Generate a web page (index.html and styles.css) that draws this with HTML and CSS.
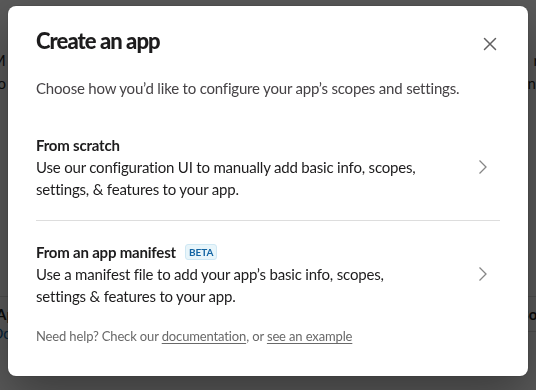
FILE: index.html
```html
<!DOCTYPE html>
<html>
<head>
<meta charset="utf-8">
<link rel="stylesheet" href="styles.css">
</head>
<body>
<div class="page">
  <div class="page-intro">
    <p class="page-line">Manage your apps here, or create a new one for</p>
    <p class="page-line">Go to the app directory to see installed apps and</p>
  </div>
  <div class="page-table">
    <div class="page-row"><span class="page-cell">App</span><span class="page-cell page-right">Book</span></div>
    <div class="page-row"><span class="page-cell page-link">Do</span><span class="page-cell"></span></div>
  </div>
</div>

<div class="overlay">
  <div class="modal">
    <div class="modal-header">
      <h1 class="modal-title">Create an app</h1>
      <button class="close" aria-label="Close">
        <svg width="14" height="14" viewBox="0 0 14 14"><path d="M1.5 1.5 L12.5 12.5 M12.5 1.5 L1.5 12.5" stroke="#616061" stroke-width="1.5" fill="none" stroke-linecap="round"/></svg>
      </button>
    </div>
    <p class="modal-sub">Choose how you’d like to configure your app’s scopes and settings.</p>
    <div class="options">
      <div class="option">
        <div class="option-text">
          <div class="option-title">From scratch</div>
          <div class="option-desc">Use our configuration UI to manually add basic info, scopes, settings, &amp; features to your app.</div>
        </div>
        <svg class="chev" width="10" height="16" viewBox="0 0 10 16"><path d="M1.5 1.5 L8 8 L1.5 14.5" stroke="#868686" stroke-width="1.3" fill="none"/></svg>
      </div>
      <div class="option">
        <div class="option-text">
          <div class="option-title">From an app manifest <span class="badge">BETA</span></div>
          <div class="option-desc">Use a manifest file to add your app’s basic info, scopes, settings &amp; features to your app.</div>
        </div>
        <svg class="chev" width="10" height="16" viewBox="0 0 10 16"><path d="M1.5 1.5 L8 8 L1.5 14.5" stroke="#868686" stroke-width="1.3" fill="none"/></svg>
      </div>
    </div>
    <p class="help">Need help? Check our <a href="#">documentation</a>, or <a href="#">see an example</a></p>
  </div>
</div>
</body>
</html>
```

FILE: styles.css
```css
html, body {
  margin: 0;
  padding: 0;
}
body {
  font-family: Lato, "Open Sans", sans-serif;
  background: #ffffff;
  color: #1d1c1d;
  width: 536px;
  height: 390px;
  overflow: hidden;
}
.page {
  padding: 49px 0 0 0;
}
.page-intro {
  display: flex;
  flex-direction: column;
  align-items: center;
}
.page-line {
  margin: 0;
  font-size: 15px;
  line-height: 23px;
  white-space: nowrap;
  color: #1d1c1d;
  letter-spacing: 5.2px;
}
.page-table {
  margin-top: 201px;
  border-top: 1px solid #dddddd;
}
.page-row {
  display: flex;
  justify-content: space-between;
  height: 34px;
  align-items: center;
  border-bottom: 1px solid #dddddd;
}
.page-row + .page-row {
  height: 18px;
  align-items: flex-start;
  border-bottom: 0;
}
.page-cell {
  font-size: 15px;
  font-weight: 700;
  margin-left: -4px;
}
.page-right {
  margin-right: -18px;
}
.page-link {
  color: #1264a3;
  font-weight: 400;
  margin-left: -8px;
  margin-top: -8px;
}
.overlay {
  position: fixed;
  inset: 0;
  background: rgba(0, 0, 0, 0.65);
  display: flex;
  justify-content: center;
  align-items: flex-start;
  padding-top: 6px;
}
.modal {
  width: 520px;
  height: 370px;
  box-sizing: border-box;
  background: #ffffff;
  border-radius: 8px;
  box-shadow: 0 0 0 1px rgba(29, 28, 29, 0.13), 0 18px 48px rgba(0, 0, 0, 0.35);
  padding: 0 28px;
  display: flex;
  flex-direction: column;
}
.modal-header {
  display: flex;
  align-items: center;
  justify-content: space-between;
  padding-top: 17px;
  height: 36px;
}
.modal-title {
  margin: 0;
  font-size: 22px;
  line-height: 30px;
  font-weight: 900;
  color: #1d1c1d;
  letter-spacing: -0.95px;
}
.close {
  border: 0;
  background: none;
  padding: 0;
  width: 14px;
  height: 14px;
  margin-right: 3px;
  margin-top: 6px;
  display: flex;
}
.modal-sub {
  margin: 18px 0 0 0;
  font-size: 15px;
  line-height: 22px;
  color: #454245;
  letter-spacing: -0.19px;
}
.options {
  margin-top: 25px;
}
.option {
  display: flex;
  align-items: center;
  justify-content: space-between;
  padding: 10px 0 20px 0;
}
.option + .option {
  border-top: 1px solid #dddddd;
  padding-top: 20px;
  padding-bottom: 16px;
}
.option-text {
  width: 400px;
}
.option-title {
  font-size: 15px;
  line-height: 22px;
  font-weight: 700;
  color: #1d1c1d;
  display: flex;
  align-items: center;
  letter-spacing: -0.2px;
}
.option-desc {
  font-size: 15px;
  line-height: 22px;
  color: #1d1c1d;
  letter-spacing: -0.19px;
}
.badge {
  display: inline-block;
  margin-left: 9px;
  font-size: 10px;
  line-height: 12px;
  font-weight: 700;
  color: #1264a3;
  background: #e8f5fa;
  border: 1px solid #cfe8f4;
  border-radius: 3px;
  padding: 1px 3px;
  letter-spacing: 0;
}
.chev {
  margin-right: 12px;
  flex: none;
}
.help {
  margin: 4px 0 0 0;
  font-size: 13px;
  line-height: 18px;
  color: #696969;
  letter-spacing: -0.14px;
}
.help a {
  color: #696969;
  text-decoration: underline;
  text-underline-offset: 2px;
}
```
